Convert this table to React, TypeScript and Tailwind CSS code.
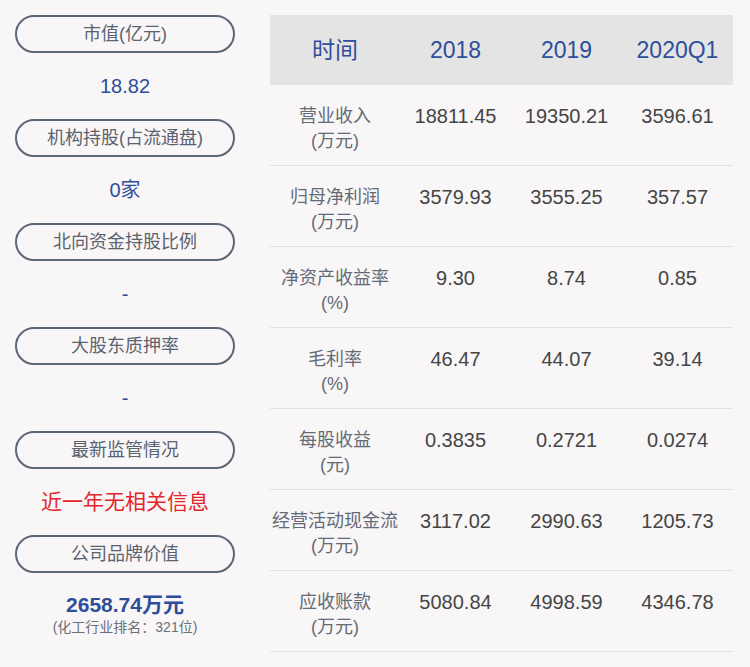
import React from 'react'

const font = { fontFamily: '"Liberation Sans", "Noto Sans CJK SC", sans-serif' }

const sideItems: { label: string; value: React.ReactNode }[] = [
  { label: '市值(亿元)', value: <span className="text-[20px] text-[#2e4e9b]">18.82</span> },
  { label: '机构持股(占流通盘)', value: <span className="text-[20px] text-[#2e4e9b]">0家</span> },
  { label: '北向资金持股比例', value: <span className="text-[20px] text-[#2e4e9b]">-</span> },
  { label: '大股东质押率', value: <span className="text-[20px] text-[#2e4e9b]">-</span> },
  { label: '最新监管情况', value: <span className="text-[21px] text-[#e4252b]">近一年无相关信息</span> },
]

const rows = [
  { name: '营业收入', unit: '(万元)', v: ['18811.45', '19350.21', '3596.61'] },
  { name: '归母净利润', unit: '(万元)', v: ['3579.93', '3555.25', '357.57'] },
  { name: '净资产收益率', unit: '(%)', v: ['9.30', '8.74', '0.85'] },
  { name: '毛利率', unit: '(%)', v: ['46.47', '44.07', '39.14'] },
  { name: '每股收益', unit: '(元)', v: ['0.3835', '0.2721', '0.0274'] },
  { name: '经营活动现金流', unit: '(万元)', v: ['3117.02', '2990.63', '1205.73'] },
  { name: '应收账款', unit: '(万元)', v: ['5080.84', '4998.59', '4346.78'] },
]

function Pill({ label }: { label: string }) {
  return (
    <div className="h-[38px] rounded-full border-2 border-[#5d6675] flex items-center justify-center text-[18px] text-[#5b6370]">
      {label}
    </div>
  )
}

export default function App() {
  return (
    <div className="w-[750px] h-[667px] bg-[#f9f6f7] flex overflow-hidden" style={font}>
      <div className="w-[250px] pl-[15px] pr-[15px] pt-[15px] flex flex-col">
        {sideItems.map(item => (
          <div key={item.label}>
            <Pill label={item.label} />
            <div className="h-[66px] pb-[1px] flex items-center justify-center">{item.value}</div>
          </div>
        ))}
        <Pill label="公司品牌价值" />
        <div className="flex flex-col items-center pt-[20px]">
          <span className="text-[21px] leading-[24px] font-bold text-[#2e4e9b]">2658.74万元</span>
          <span className="text-[14px] leading-[20px] text-[#6a707b]">(化工行业排名：321位)</span>
        </div>
      </div>
      <div className="ml-[20px] w-[463px] pt-[15px]">
        <div className="h-[70px] bg-[#e4e4e4] grid grid-cols-[130px_111px_111px_111px] items-center text-center text-[23px] text-[#2e4e9b]">
          <span>时间</span>
          <span>2018</span>
          <span>2019</span>
          <span>2020Q1</span>
        </div>
        {rows.map(r => (
          <div
            key={r.name}
            className="h-[81px] border-b border-[#e3e0e1] grid grid-cols-[130px_111px_111px_111px] text-center pt-[19px]"
          >
            <div className="text-[18px] leading-[25px] text-[#646b76]">
              <div>{r.name}</div>
              <div>{r.unit}</div>
            </div>
            {r.v.map((x, i) => (
              <div key={i} className="text-[20px] leading-[25px] text-[#454545]">{x}</div>
            ))}
          </div>
        ))}
      </div>
    </div>
  )
}
